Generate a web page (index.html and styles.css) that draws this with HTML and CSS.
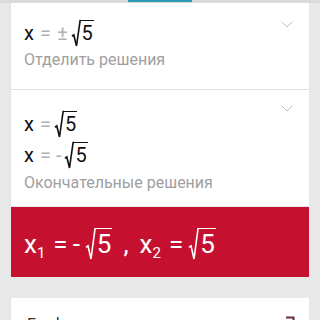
FILE: index.html
```html
<!DOCTYPE html>
<html lang="ru">
<head>
    <meta charset="UTF-8">
    <meta name="viewport" content="width=device-width, initial-scale=1.0">
    <title>Решение</title>
    <link rel="stylesheet" href="styles.css">
</head>
<body>
    <!-- Tab indicator strip -->
    <div class="topbar"><span class="tab"></span></div>

    <div class="stack">
        <!-- Step 1 -->
        <section class="step first">
            <div class="step-body">
                <div class="math">
                    <span class="var">x</span><span class="op">=</span><span class="op pm">±</span><span class="sqrt"><svg class="rad" viewBox="0 0 10 20" preserveAspectRatio="none"><polyline points="0,12.5 2,11.5 5,20 9,0.5 10,0.5"/></svg><span class="radicand">5</span></span>
                </div>
                <p class="caption">Отделить решения</p>
            </div>
            <svg class="chevron" viewBox="0 0 12 7"><polyline points="0.5,0.5 6,6 11.5,0.5"/></svg>
        </section>

        <!-- Step 2 -->
        <section class="step second">
            <div class="step-body">
                <div class="math">
                    <span class="var">x</span><span class="op">=</span><span class="sqrt"><svg class="rad" viewBox="0 0 10 20" preserveAspectRatio="none"><polyline points="0,12.5 2,11.5 5,20 9,0.5 10,0.5"/></svg><span class="radicand">5</span></span>
                </div>
                <div class="math">
                    <span class="var">x</span><span class="op">=</span><span class="op minus">-</span><span class="sqrt"><svg class="rad" viewBox="0 0 10 20" preserveAspectRatio="none"><polyline points="0,12.5 2,11.5 5,20 9,0.5 10,0.5"/></svg><span class="radicand">5</span></span>
                </div>
                <p class="caption">Окончательные решения</p>
            </div>
            <svg class="chevron" viewBox="0 0 12 7"><polyline points="0.5,0.5 6,6 11.5,0.5"/></svg>
        </section>

        <!-- Final answer -->
        <section class="answer">
            <div class="math">
                <span class="var">x<sub>1</sub></span><span class="op">=</span><span class="op minus">-</span><span class="sqrt"><svg class="rad" viewBox="0 0 10 20" preserveAspectRatio="none"><polyline points="0,12.5 2,11.5 5,20 9,0.5 10,0.5"/></svg><span class="radicand">5</span></span><span class="comma">,</span><span class="var">x<sub>2</sub></span><span class="op">=</span><span class="sqrt"><svg class="rad" viewBox="0 0 10 20" preserveAspectRatio="none"><polyline points="0,12.5 2,11.5 5,20 9,0.5 10,0.5"/></svg><span class="radicand">5</span></span>
            </div>
        </section>

        <!-- Next card -->
        <section class="step next">
            <p class="title">График</p>
            <svg class="share" viewBox="0 0 10 10"><polyline points="1,1.5 8.5,1.5 8.5,9"/></svg>
        </section>
    </div>
</body>
</html>
```

FILE: styles.css
```css
body {
    margin: 0;
    font-family: Roboto, "Liberation Sans", Arial, sans-serif;
    background-color: #e8e8e8;
    color: #111;
    overflow: hidden;
}
.topbar {
    height: 3px;
    background-color: #dadada;
    display: flex;
    padding-left: 128px;
}
.tab {
    width: 64px;
    height: 2px;
    background-color: #2b9cb6;
}
.stack {
    display: flex;
    flex-direction: column;
    padding: 0 11px;
}
.step {
    background-color: #fff;
    display: flex;
    justify-content: space-between;
    align-items: flex-start;
    padding: 0 16px 0 13px;
    box-shadow: -1px 0 0 #e2e2e2;
}
.step.first {
    height: 86px;
    border-bottom: 1px solid #e0e0e0;
}
.step.second {
    height: 116px;
}
.step-body {
    display: flex;
    flex-direction: column;
}
.math {
    font-size: 20px;
    line-height: 31px;
    display: flex;
    align-items: baseline;
}
.first .math {
    margin-top: 15px;
}
.second .math:first-child {
    margin-top: 19px;
}
.var {
    color: #111;
}
.op {
    color: #b0b0b0;
    margin-left: 6px;
}
.pm {
    margin-left: 6px;
}
.minus {
    margin-left: 5px;
}
.sqrt {
    display: inline-flex;
    align-items: stretch;
    margin-left: 4px;
}
.rad {
    width: 9px;
    align-self: stretch;
    fill: none;
    stroke: #111;
    stroke-width: 1.6;
    overflow: visible;
}
.rad polyline {
    vector-effect: non-scaling-stroke;
}
.radicand {
    align-self: baseline;
    border-top: 1.6px solid #111;
    line-height: 25px;
    padding: 0 1px 0 1px;
}
.caption {
    margin: 0;
    font-size: 16px;
    line-height: 20px;
    color: #a0a0a0;
}
.first .caption {
    margin-top: 1px;
}
.second .caption {
    margin-top: 2px;
}
.chevron {
    width: 12px;
    height: 7px;
    margin-top: 18px;
    fill: none;
    stroke: #bdbdbd;
    stroke-width: 1;
}
.second .chevron {
    margin-top: 15px;
}
.answer {
    background-color: #c5112f;
    height: 70px;
    margin-top: 1px;
    padding: 0 13px;
    display: flex;
    align-items: center;
}
.answer .math {
    font-size: 26px;
    color: #fff;
    margin-top: 4px;
}
.answer .var,
.answer .op {
    color: #fff;
}
.answer .op {
    margin-left: 8px;
}
.answer .minus {
    margin-left: 5px;
}
.answer .sqrt {
    margin-left: 6px;
}
.answer .rad {
    stroke: #fff;
    width: 10px;
}
.answer .radicand {
    border-top-color: #fff;
    line-height: 30px;
}
.answer sub {
    font-size: 15px;
    vertical-align: -5px;
    line-height: 0;
}
.comma {
    margin-left: 11px;
    margin-right: 11px;
}
.step.next {
    margin-top: 21px;
    height: 40px;
    align-items: flex-start;
}
.title {
    margin: 17px 0 0 3px;
    font-size: 16px;
    line-height: 20px;
    color: #333;
}
.share {
    width: 10px;
    height: 10px;
    margin-top: 18px;
    margin-right: -2px;
    fill: none;
    stroke: #6b2a3a;
    stroke-width: 2;
}
```
